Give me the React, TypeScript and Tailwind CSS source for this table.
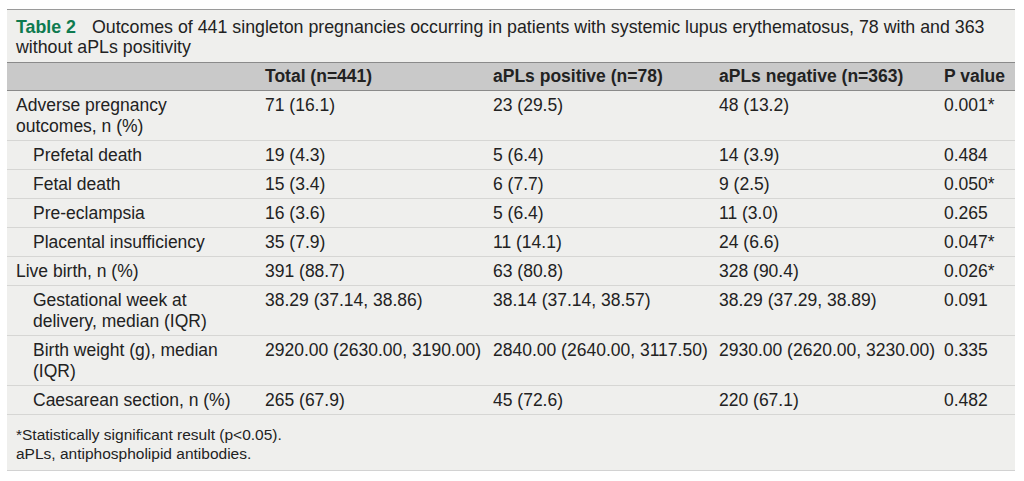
import React from "react";

type Row = {
  label: React.ReactNode;
  indent?: boolean;
  cells: [string, string, string, string];
};

const rows: Row[] = [
  {
    label: (
      <>
        Adverse pregnancy
        <br />
        outcomes, n (%)
      </>
    ),
    cells: ["71 (16.1)", "23 (29.5)", "48 (13.2)", "0.001*"],
  },
  { label: "Prefetal death", indent: true, cells: ["19 (4.3)", "5 (6.4)", "14 (3.9)", "0.484"] },
  { label: "Fetal death", indent: true, cells: ["15 (3.4)", "6 (7.7)", "9 (2.5)", "0.050*"] },
  { label: "Pre-eclampsia", indent: true, cells: ["16 (3.6)", "5 (6.4)", "11 (3.0)", "0.265"] },
  { label: "Placental insufficiency", indent: true, cells: ["35 (7.9)", "11 (14.1)", "24 (6.6)", "0.047*"] },
  { label: "Live birth, n (%)", cells: ["391 (88.7)", "63 (80.8)", "328 (90.4)", "0.026*"] },
  {
    label: (
      <>
        Gestational week at
        <br />
        delivery, median (IQR)
      </>
    ),
    indent: true,
    cells: ["38.29 (37.14, 38.86)", "38.14 (37.14, 38.57)", "38.29 (37.29, 38.89)", "0.091"],
  },
  {
    label: (
      <>
        Birth weight (g), median
        <br />
        (IQR)
      </>
    ),
    indent: true,
    cells: [
      "2920.00 (2630.00, 3190.00)",
      "2840.00 (2640.00, 3117.50)",
      "2930.00 (2620.00, 3230.00)",
      "0.335",
    ],
  },
  { label: "Caesarean section, n (%)", indent: true, cells: ["265 (67.9)", "45 (72.6)", "220 (67.1)", "0.482"] },
];

export default function App() {
  return (
    <div
      className="w-[1024px] h-[481px] bg-white pt-[9px] pl-[7px] text-[#222222] overflow-hidden"
      style={{ fontFamily: '"Liberation Sans", Arial, sans-serif' }}
    >
      <div className="w-[1008px] bg-[#efefed] border-t border-[#9a9a9a] border-b border-b-[#d2d2d2]">
        <div className="pl-[9px] pt-[8px] pb-[5px] text-[17.8px] leading-[19.5px]">
          <div className="whitespace-nowrap">
            <span className="font-bold text-[#0e7a4f]">Table 2</span>
            <span className="ml-[16px]">
              Outcomes of 441 singleton pregnancies occurring in patients with systemic lupus erythematosus, 78 with and 363
            </span>
          </div>
          <div>without aPLs positivity</div>
        </div>
        <table className="w-[1008px] table-fixed border-collapse text-[17.5px] leading-[21px]">
          <colgroup>
            <col className="w-[249px]" />
            <col className="w-[228px]" />
            <col className="w-[226px]" />
            <col className="w-[225px]" />
            <col className="w-[80px]" />
          </colgroup>
          <thead>
            <tr className="bg-[#c9c9c9] border-t border-b border-[#8a8a8a]">
              <th className="py-[3px] pl-[9px]"></th>
              <th className="py-[3px] pl-[9px] text-left font-bold whitespace-nowrap">Total (n=441)</th>
              <th className="py-[3px] pl-[9px] text-left font-bold whitespace-nowrap">aPLs positive (n=78)</th>
              <th className="py-[3px] pl-[9px] text-left font-bold whitespace-nowrap">aPLs negative (n=363)</th>
              <th className="py-[3px] pl-[9px] text-left font-bold whitespace-nowrap">P value</th>
            </tr>
          </thead>
          <tbody>
            {rows.map((r, i) => (
              <tr key={i} className="border-b border-[#d6d6d4] align-top">
                <td className={`py-[3.5px] ${r.indent ? "pl-[26px]" : "pl-[9px]"} whitespace-nowrap`}>{r.label}</td>
                {r.cells.map((c, j) => (
                  <td key={j} className="py-[3.5px] pl-[9px] whitespace-nowrap">
                    {c}
                  </td>
                ))}
              </tr>
            ))}
          </tbody>
        </table>
        <div className="pl-[9px] pt-[10px] pb-[7px] text-[15.5px] leading-[19px]">
          <div>*Statistically significant result (p&lt;0.05).</div>
          <div>aPLs, antiphospholipid antibodies.</div>
        </div>
      </div>
    </div>
  );
}
